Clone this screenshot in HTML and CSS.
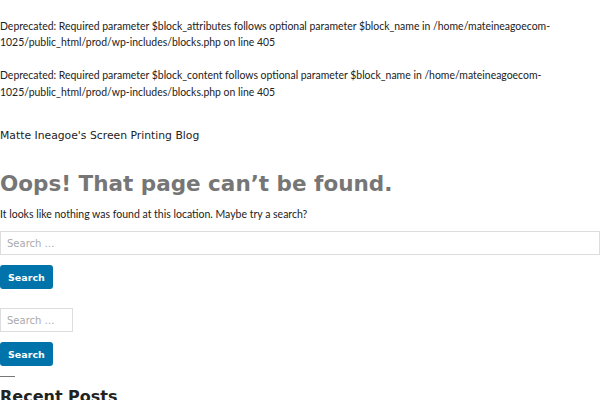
FILE: index.html
```html
<!DOCTYPE html>
<html lang="en">

<head>
    <meta charset="UTF-8">
    <meta name="viewport" content="width=device-width, initial-scale=1.0">
    <title>Page not found - Matte Ineagoe's Screen Printing Blog</title>
    <link rel="stylesheet" href="styles.css">
</head>

<body>

    <div class="php-notices">
        <br>
        Deprecated: Required parameter $block_attributes follows optional parameter $block_name in /home/mateineagoecom-1025/public_html/prod/wp-includes/blocks.php on line 405<br>
        <br>
        Deprecated: Required parameter $block_content follows optional parameter $block_name in /home/mateineagoecom-1025/public_html/prod/wp-includes/blocks.php on line 405<br>
    </div>

    <header class="site-header">
        <p class="site-title">Matte Ineagoe's Screen Printing Blog</p>
    </header>

    <main class="site-main">
        <section class="error-404">
            <h1 class="page-title">Oops! That page can’t be found.</h1>
            <p class="page-text">It looks like nothing was found at this location. Maybe try a search?</p>

            <form class="search-form search-form-wide">
                <input type="search" class="search-field" placeholder="Search …">
                <button type="submit" class="search-submit">Search</button>
            </form>
        </section>

        <aside class="widget-area">
            <form class="search-form">
                <input type="search" class="search-field search-field-small" placeholder="Search …">
                <button type="submit" class="search-submit">Search</button>
            </form>

            <hr class="widget-rule">
            <h2 class="widget-title">Recent Posts</h2>
        </aside>
    </main>

</body>

</html>
```

FILE: styles.css
```css
body {
    margin: 0;
    font-family: "DejaVu Sans", Verdana, sans-serif;
    color: #1e1e1e;
    background-color: #fff;
}

.php-notices {
    padding-top: 1px;
    font-family: Lato, "Noto Sans", sans-serif;
    font-size: 10.45px;
    line-height: 16.5px;
    color: #222;
}

.site-header {
    margin-top: 28px;
}

.site-title {
    margin: 0;
    font-size: 10.8px;
    line-height: 16px;
    color: #222;
}

.page-title {
    margin: 26px 0 0;
    font-size: 21.5px;
    line-height: 28px;
    font-weight: bold;
    color: #767676;
}

.page-text {
    margin: 8px 0 0;
    font-family: Lato, "Noto Sans", sans-serif;
    font-size: 10.5px;
    line-height: 16px;
    color: #222;
}

.search-form {
    display: flex;
    flex-direction: column;
    align-items: flex-start;
    gap: 10px;
    margin-top: 9px;
}

.search-field {
    box-sizing: border-box;
    width: 100%;
    height: 24px;
    padding: 3px 6px;
    font-family: "DejaVu Sans", Verdana, sans-serif;
    font-size: 10px;
    border: 1px solid #ddd;
    border-radius: 0;
    color: #333;
}

.search-field::placeholder {
    color: #aaa;
}

.search-field-small {
    width: 73px;
}

.search-submit {
    height: 24px;
    padding: 0 8px;
    font-family: "DejaVu Sans", Verdana, sans-serif;
    font-size: 9.5px;
    font-weight: bold;
    color: #fff;
    background-color: #0073aa;
    border: none;
    border-radius: 3px;
    cursor: pointer;
}

.widget-area {
    margin-top: 19px;
}

.widget-area .search-form {
    margin-top: 0;
}

.widget-rule {
    width: 15px;
    margin: 10px 0 0;
    border: none;
    border-top: 1px solid #777;
}

.widget-title {
    margin: 9px 0 0;
    font-size: 16px;
    line-height: 22px;
    color: #222;
}
```
